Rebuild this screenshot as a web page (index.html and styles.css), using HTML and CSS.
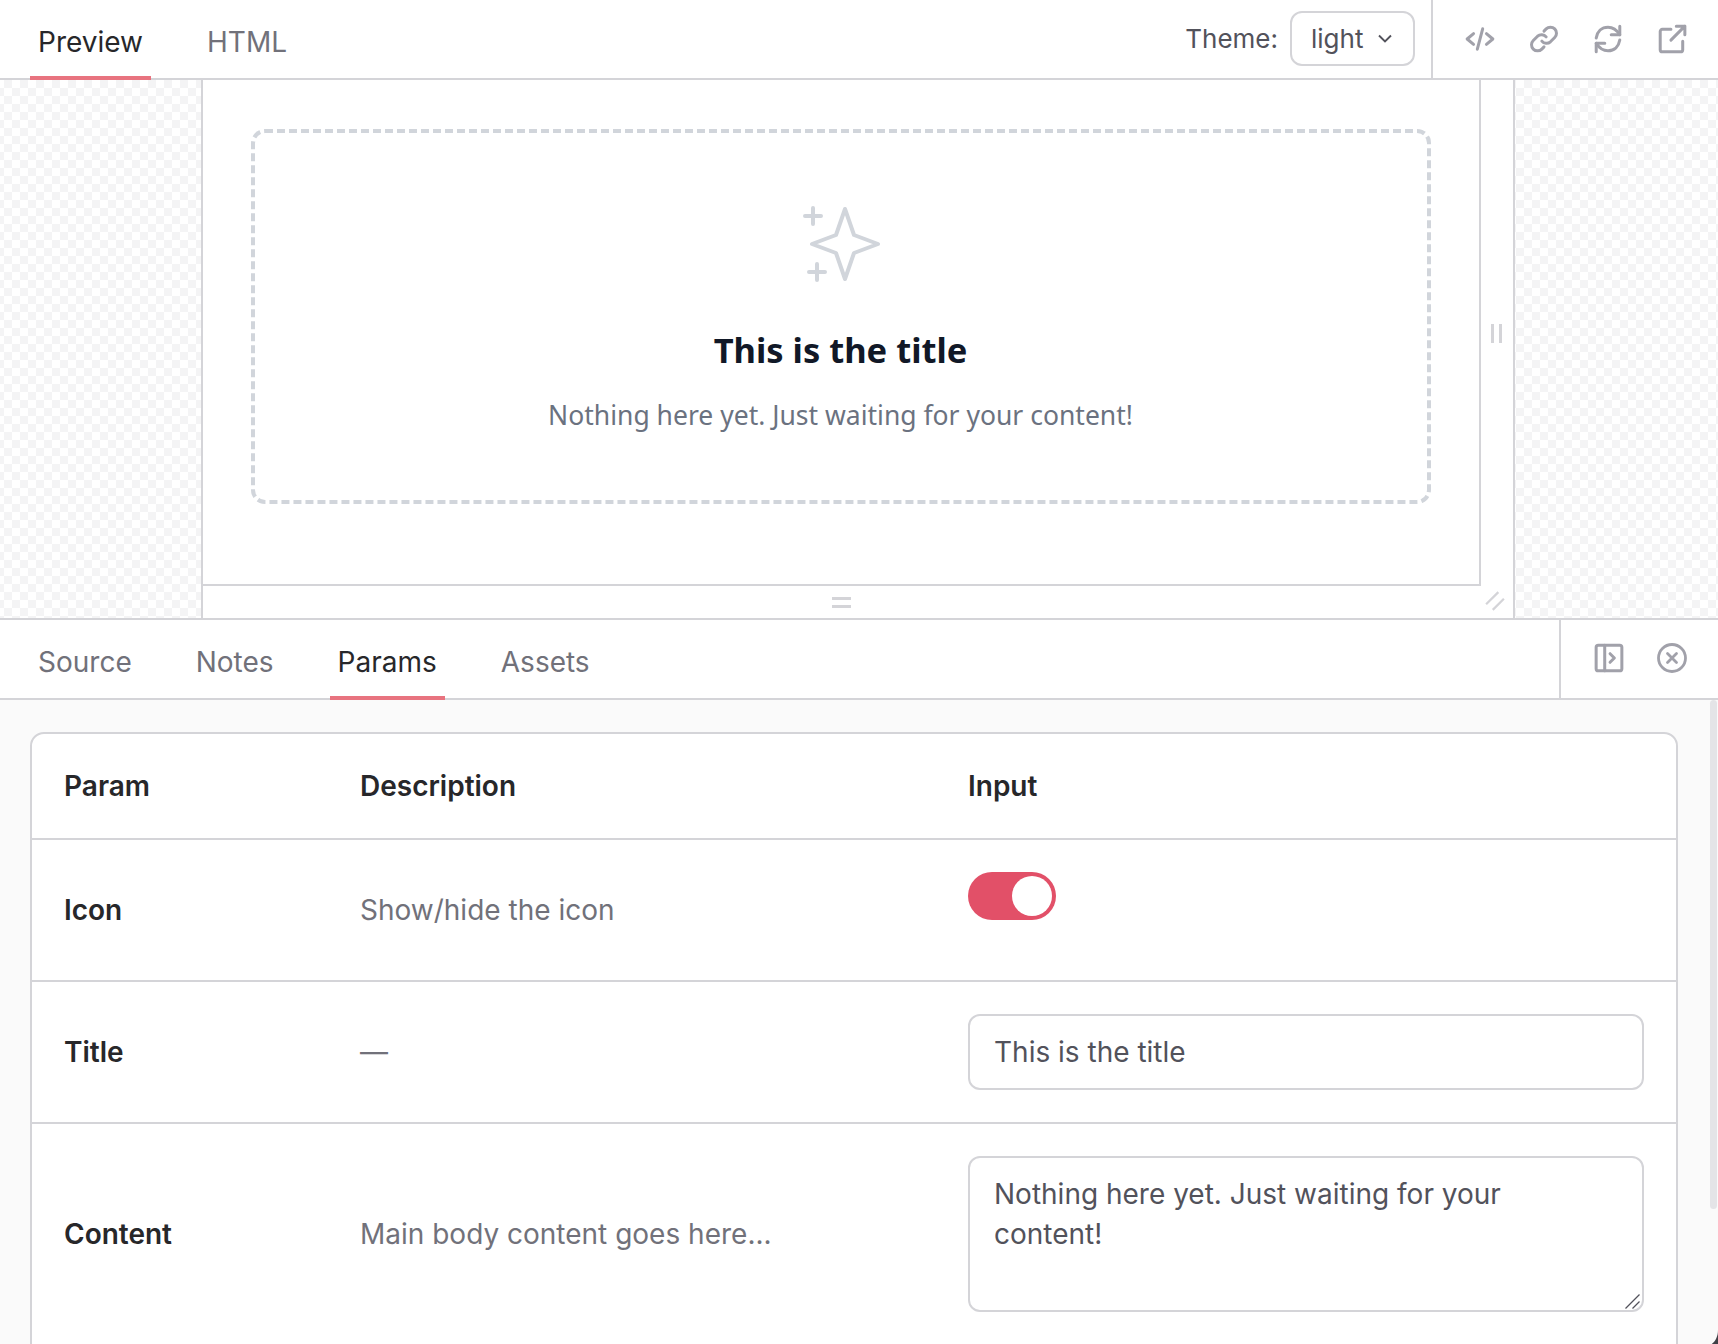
FILE: index.html
```html
<!DOCTYPE html>
<html lang="en">
<head>
    <meta charset="UTF-8">
    <title>Empty state - Params</title>
    <link rel="stylesheet" href="styles.css">
</head>
<body>
    <!-- Top toolbar -->
    <header class="bar bar-top">
        <nav class="tabs">
            <a class="tab active">Preview</a>
            <a class="tab">HTML</a>
        </nav>
        <div class="theme">
            <span class="theme-label">Theme:</span>
            <div class="theme-select">
                <span>light</span>
                <svg class="chevron" viewBox="0 0 16 16"><path d="M2 5.500l6 6 6-6"/></svg>
            </div>
        </div>
        <div class="actions">
            <button class="icon-btn"><svg viewBox="0 0 28 28"><path d="M8 9l-6 5 6 5M20 9l6 5-6 5M16.500 4.500l-5 19"/></svg></button>
            <button class="icon-btn"><svg viewBox="0 0 28 28"><path d="M12 16a5.500 5.500 0 0 0 8 .6l4-4a5.600 5.600 0 0 0-8-8l-2 2"/><path d="M16 12a5.500 5.500 0 0 0-8-.6l-4 4a5.600 5.600 0 0 0 8 8l2-2"/></svg></button>
            <button class="icon-btn"><svg viewBox="0 0 28 28"><path d="M25 2v8h-8"/><path d="M3 26v-8h8"/><path d="M3 13C4 7 8 3 14 3c5 0 8.500 3 11 7"/><path d="M25 15c-1 6-5 10-11 10-5 0-8.500-3-11-7"/></svg></button>
            <button class="icon-btn"><svg viewBox="0 0 28 28"><path d="M13 5H5a2 2 0 0 0-2 2v17a2 2 0 0 0 2 2h17a2 2 0 0 0 2-2v-8"/><path d="M13 15L26 2M18 2h8v8"/></svg></button>
        </div>
    </header>

    <!-- Preview stage -->
    <section class="stage">
        <div class="frame">
            <div class="frame-body">
                <div class="empty">
                    <svg class="empty-icon" viewBox="-4 0 80 80">
                        <path d="M40 5l9 26 24 9-24 9-9 26-9-26-24-9 24-9z"/>
                        <path d="M0 12h16M8 4v16M4 68h16M12 60v16"/>
                    </svg>
                    <h2 class="empty-title">This is the title</h2>
                    <p class="empty-text">Nothing here yet. Just waiting for your content!</p>
                </div>
            </div>
            <div class="handle handle-side"><i></i><i></i></div>
            <div class="handle handle-bottom"><i></i><i></i></div>
            <div class="handle handle-corner">
                <svg viewBox="0 0 18 18"><path d="M1 12L12 1M7 17L17 7"/></svg>
            </div>
        </div>
    </section>

    <!-- Lower panel -->
    <header class="bar bar-panel">
        <nav class="tabs">
            <a class="tab">Source</a>
            <a class="tab">Notes</a>
            <a class="tab active">Params</a>
            <a class="tab">Assets</a>
        </nav>
        <div class="actions actions-panel">
            <button class="icon-btn"><svg viewBox="0 0 28 28"><rect x="2" y="2" width="24" height="24" rx="2"/><path d="M10 2v24M15 10l4 4-4 4"/></svg></button>
            <button class="icon-btn"><svg viewBox="0 0 30 30"><circle cx="15" cy="15" r="13.500"/><path d="M10.500 10.500l9 9M19.500 10.500l-9 9"/></svg></button>
        </div>
    </header>

    <main class="panel">
        <div class="panel-scroll">
            <table class="params">
                <thead>
                    <tr>
                        <th class="col-param">Param</th>
                        <th class="col-desc">Description</th>
                        <th>Input</th>
                    </tr>
                </thead>
                <tbody>
                    <tr>
                        <th>Icon</th>
                        <td class="desc">Show/hide the icon</td>
                        <td class="cell-top"><span class="toggle"><span class="knob"></span></span></td>
                    </tr>
                    <tr>
                        <th>Title</th>
                        <td class="desc">—</td>
                        <td><input class="field" type="text" value="This is the title"></td>
                    </tr>
                    <tr>
                        <th>Content</th>
                        <td class="desc">Main body content goes here...</td>
                        <td>
                            <div class="area-wrap">
                                <textarea class="field field-area">Nothing here yet. Just waiting for your content!</textarea>
                                <svg class="resizer" viewBox="0 0 15 15"><path d="M.5 14.500L14.500.5M7.500 14.500l7-7"/></svg>
                            </div>
                        </td>
                    </tr>
                    <!-- next row sits below the fold -->
                    <tr>
                        <td colspan="3"></td>
                    </tr>
                </tbody>
            </table>
        </div>
        <div class="scrollbar"><div class="thumb"></div></div>
        <svg class="window-corner" viewBox="0 0 10 16"><path d="M10 0C10 8 6 14 0 16h10z"/></svg>
    </main>
</body>
</html>
```

FILE: styles.css
```css
/* page */
* {
    box-sizing: border-box;
}

html, body {
    height: 100%;
}

body {
    margin: 0;
    height: 1344px;
    overflow: hidden;
    background-color: #fff;
    color: #18181b;
    font-family: Inter, "Liberation Sans", sans-serif;
    font-size: 28px;
}

svg {
    display: block;
}

/* toolbars */
.bar {
    display: flex;
    align-items: stretch;
    background-color: #fff;
    border-bottom: 2px solid #d4d4d8;
}

.bar-top {
    height: 80px;
}

.bar-panel {
    height: 80px;
}

.tabs {
    display: flex;
    gap: 48px;
    padding-left: 30px;
    flex: 1;
}

.tab {
    display: flex;
    align-items: center;
    margin-bottom: -2px;
    padding: 8px 8px 0;
    color: #71717a;
    border-bottom: 4px solid transparent;
    height: calc(100% + 2px);
}

.tab.active {
    color: #27272a;
    border-bottom-color: #e8737f;
}

/* theme picker */
.theme {
    display: flex;
    align-items: center;
    gap: 12px;
    padding: 0 16px 2px 0;
    font-size: 26px;
}

.theme-label {
    color: #52525b;
}

.theme-select {
    display: flex;
    align-items: center;
    justify-content: space-between;
    width: 125px;
    height: 55px;
    padding: 0 20px 0 19px;
    color: #52525b;
    border: 2px solid #d4d4d8;
    border-radius: 12px;
}

.chevron {
    width: 16px;
    height: 16px;
    fill: none;
    stroke: #52525b;
    stroke-width: 1.9;
}

.actions {
    display: flex;
    align-items: center;
    gap: 34px;
    padding: 0 31px 0 32px;
    border-left: 2px solid #d4d4d8;
}

.actions-panel {
    gap: 33px;
    padding: 0 31px 2px 33px;
}

.icon-btn {
    width: 30px;
    height: 30px;
    padding: 0;
    background: none;
    border: none;
}

.icon-btn svg {
    width: 30px;
    height: 30px;
    fill: none;
    stroke: #a1a1aa;
    stroke-width: 2.8;
    stroke-linecap: round;
    stroke-linejoin: round;
}

/* preview stage */
.stage {
    display: flex;
    justify-content: center;
    height: 540px;
    padding-right: 3px;
    background: repeating-conic-gradient(#f4f4f5 0 25%, #fff 0 50%) -4px 0 / 16px 16px;
    border-bottom: 2px solid #d4d4d8;
}

.frame {
    display: grid;
    grid-template-columns: 1fr 32px;
    grid-template-rows: 1fr 32px;
    width: 1314px;
    background-color: #fff;
    border-left: 2px solid #d4d4d8;
    border-right: 2px solid #d4d4d8;
}

.frame-body {
    padding: 49px 48px 0 48px;
    border-right: 2px solid #d4d4d8;
    border-bottom: 2px solid #d4d4d8;
}

.empty {
    display: flex;
    flex-direction: column;
    align-items: center;
    height: 375px;
    padding-top: 71px;
    border: 4px dashed #d1d5db;
    border-radius: 14px;
}

.empty-icon {
    width: 80px;
    height: 80px;
    fill: none;
    stroke: #d1d5db;
    stroke-width: 4;
    stroke-linecap: round;
    stroke-linejoin: round;
}

.empty-title {
    margin: 42px 0 0;
    color: #111827;
    font-family: "Noto Sans", sans-serif;
    font-size: 34.5px;
    font-weight: 700;
    line-height: 48px;
}

.empty-text {
    margin: 21px 0 0;
    color: #6b7280;
    font-family: "Noto Sans", sans-serif;
    font-size: 26.5px;
    line-height: 40px;
}

.handle {
    display: flex;
    align-items: center;
    justify-content: center;
}

.handle i {
    display: block;
    background-color: #d4d4d8;
}

.handle-side {
    gap: 5px;
}

.handle-side i {
    width: 3px;
    height: 19px;
}

.handle-bottom {
    flex-direction: column;
    gap: 5px;
}

.handle-bottom i {
    width: 19px;
    height: 3px;
}

.handle-corner {
    padding: 0 4px 3px 0;
}

.handle-corner svg {
    width: 20px;
    height: 20px;
    fill: none;
    stroke: #d4d4d8;
    stroke-width: 2;
}

/* params panel */
.panel {
    position: relative;
    display: flex;
    height: 646px;
    background-color: #fafafa;
}

.panel-scroll {
    flex: 1;
    padding: 32px 32px 0 30px;
    overflow: hidden;
}

.params {
    width: 100%;
    border-collapse: separate;
    border-spacing: 0;
    background-color: #fff;
    border: 2px solid #d4d4d8;
    border-radius: 14px;
    table-layout: fixed;
}

.params th, .params td {
    padding: 32px;
    text-align: left;
    vertical-align: middle;
    line-height: 40px;
    border-bottom: 2px solid #d4d4d8;
}

.params th {
    color: #27272a;
    font-weight: 600;
}

.params thead th {
    height: 105px;
}

.params tbody tr {
    height: 142px;
}

.col-param {
    width: 296px;
}

.col-desc {
    width: 608px;
}

.desc {
    color: #71717a;
}

.params td.cell-top {
    vertical-align: top;
}

.toggle {
    display: block;
    width: 88px;
    height: 48px;
    padding: 4px;
    background-color: #e25068;
    border-radius: 24px;
}

.knob {
    display: block;
    width: 40px;
    height: 40px;
    margin-left: 40px;
    background-color: #fff;
    border-radius: 50%;
}

.field {
    display: block;
    width: 100%;
    height: 76px;
    padding: 0 24px;
    color: #52525b;
    background-color: #fff;
    font: 28px/40px Inter, "Liberation Sans", sans-serif;
    border: 2px solid #d4d4d8;
    border-radius: 12px;
    outline: none;
}

.area-wrap {
    position: relative;
}

.field-area {
    height: 156px;
    padding: 16px 40px 16px 24px;
    resize: none;
}

.resizer {
    position: absolute;
    right: 4px;
    bottom: 3px;
    width: 15px;
    height: 15px;
    fill: none;
    stroke: #52525b;
    stroke-width: 1.3;
}

/* scrollbar */
.scrollbar {
    width: 8px;
}

.thumb {
    width: 7px;
    height: 509px;
    background-color: #e4e4e7;
    border-radius: 4px;
}

.window-corner {
    position: absolute;
    right: 0;
    bottom: 0;
    width: 10px;
    height: 16px;
    fill: #3f3f46;
}
```
